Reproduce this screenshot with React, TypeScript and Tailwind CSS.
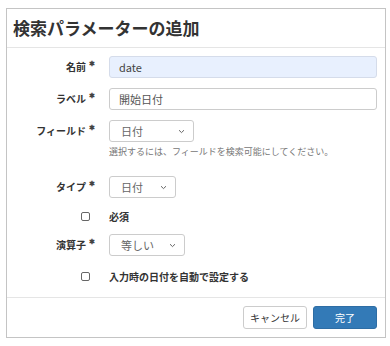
import React from "react";

const font = { fontFamily: '"Noto Sans CJK JP", "Noto Sans", sans-serif' };

function Chevron() {
  return (
    <svg width="7" height="5" viewBox="0 0 7 5" className="text-[#666]">
      <path d="M1 1.2 L3.5 3.6 L6 1.2" fill="none" stroke="currentColor" strokeWidth="1" />
    </svg>
  );
}

function Label({ text }: { text: string }) {
  return (
    <div className="w-[84px] flex justify-end items-start shrink-0">
      <span className="text-[10px] font-bold text-[#333] leading-[14px]">{text}</span>
      <span className="text-[7px] font-bold text-[#444] leading-[7px] ml-[3px] mr-[-4px]">&#x2731;</span>
    </div>
  );
}

function Select({ value, width }: { value: string; width: string }) {
  return (
    <div
      className={`${width} h-[22px] border border-[#ccc] rounded-[3px] bg-white flex items-center justify-between pl-[11px] pr-[8px] text-[11px] text-[#666]`}
    >
      <span>{value}</span>
      <Chevron />
    </div>
  );
}

export default function App() {
  return (
    <div className="w-[390px] h-[346px] bg-white pt-[8px] pl-[6px]" style={font}>
      <div className="w-[380px] h-[330px] border border-[#c4c4c4] bg-white flex flex-col">
        <div className="h-[39px] border-b border-[#e5e5e5] flex items-center pl-[6px]">
          <span className="text-[17px] font-bold text-[#333]">検索パラメーターの追加</span>
        </div>
        <div className="flex-1 flex flex-col pt-[8px]">
          <div className="flex items-center h-[22px]">
            <Label text="名前" />
            <div className="ml-[18px] w-[268px] h-[22px] border border-[#d5dcea] rounded-[3px] bg-[#e8f0fe] flex items-center pl-[9px] text-[11px] text-[#444]">
              date
            </div>
          </div>
          <div className="flex items-center h-[22px] mt-[10px]">
            <Label text="ラベル" />
            <div className="ml-[18px] w-[268px] h-[22px] border border-[#ccc] rounded-[3px] bg-white flex items-center pl-[9px] text-[11px] text-[#555]">
              開始日付
            </div>
          </div>
          <div className="flex items-center h-[22px] mt-[10px]">
            <Label text="フィールド" />
            <div className="ml-[18px]">
              <Select value="日付" width="w-[85px]" />
            </div>
          </div>
          <div className="pl-[102px] mt-[3px] text-[9px] text-[#777] leading-[14px]">
            選択するには、フィールドを検索可能にしてください。
          </div>
          <div className="flex items-center h-[22px] mt-[17px]">
            <Label text="タイプ" />
            <div className="ml-[18px]">
              <Select value="日付" width="w-[67px]" />
            </div>
          </div>
          <div className="flex items-center h-[16px] mt-[10px]">
            <div className="w-[84px] flex justify-end">
              <div className="w-[9px] h-[9px] border border-[#666] rounded-[2px] mr-[1px]" />
            </div>
            <span className="ml-[18px] text-[10px] font-bold text-[#333]">必須</span>
          </div>
          <div className="flex items-center h-[22px] mt-[10px]">
            <Label text="演算子" />
            <div className="ml-[18px]">
              <Select value="等しい" width="w-[76px]" />
            </div>
          </div>
          <div className="flex items-center h-[16px] mt-[12px]">
            <div className="w-[84px] flex justify-end">
              <div className="w-[9px] h-[9px] border border-[#666] rounded-[2px] mr-[1px]" />
            </div>
            <span className="ml-[18px] text-[10px] font-bold text-[#333]">入力時の日付を自動で設定する</span>
          </div>
        </div>
        <div className="h-[40px] border-t border-[#e5e5e5] flex items-center justify-end pr-[8px] gap-[6px]">
          <div className="w-[64px] h-[23px] border border-[#ccc] rounded-[3px] bg-white flex items-center justify-center text-[10px] text-[#333]">
            キャンセル
          </div>
          <div className="w-[64px] h-[23px] border border-[#2e6da4] rounded-[3px] bg-[#337ab7] flex items-center justify-center text-[10px] text-white">
            完了
          </div>
        </div>
      </div>
    </div>
  );
}
